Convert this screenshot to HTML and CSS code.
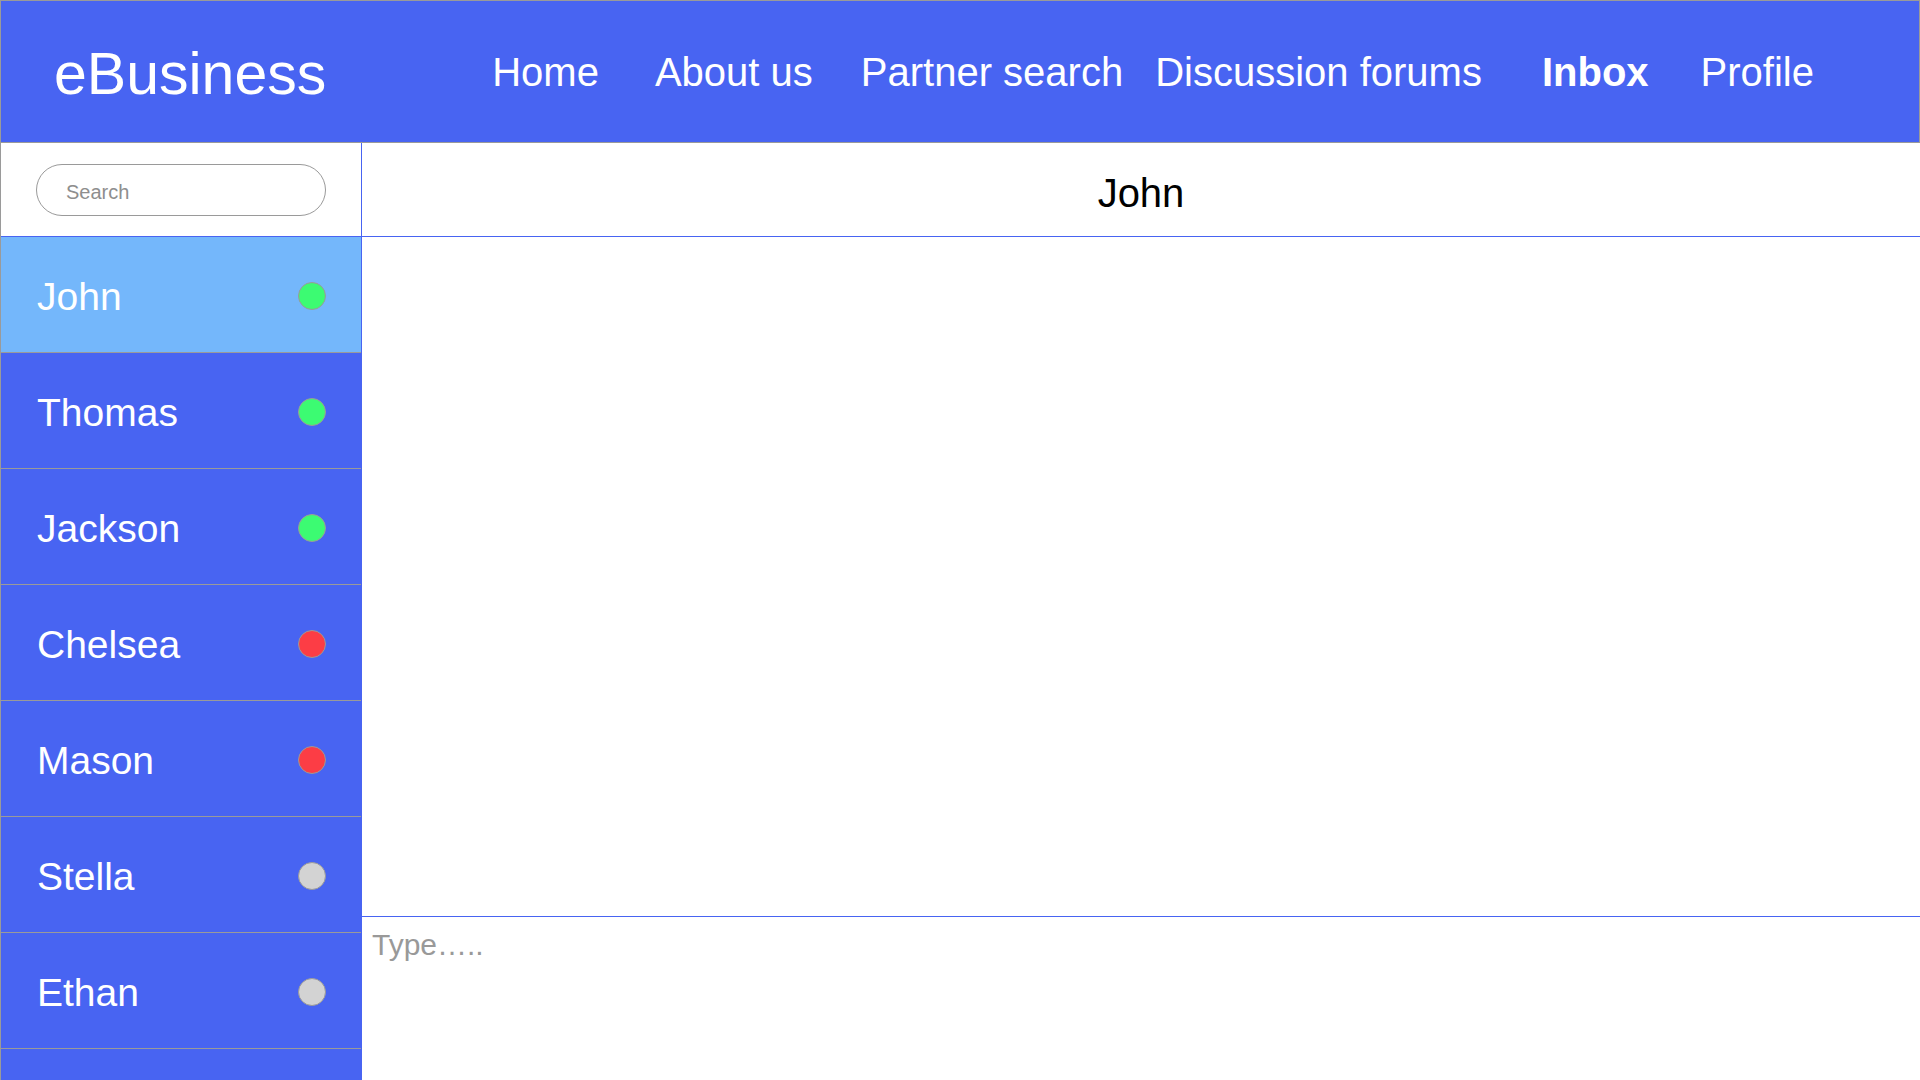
FILE: index.html
```html
<!DOCTYPE html>
<html lang="en">
<head>
<meta charset="utf-8">
<title>eBusiness - Inbox</title>
<link rel="stylesheet" href="styles.css">
</head>
<body>
<header class="topbar">
  <div class="logo">eBusiness</div>
  <nav class="nav">
    <a class="nav-item nav-home">Home</a>
    <a class="nav-item nav-about">About us</a>
    <a class="nav-item nav-partner">Partner search</a>
    <a class="nav-item nav-forums">Discussion forums</a>
    <a class="nav-item nav-inbox active">Inbox</a>
    <a class="nav-item nav-profile">Profile</a>
  </nav>
</header>
<main class="main">
  <aside class="sidebar">
    <div class="search-row">
      <div class="search-box">Search</div>
    </div>
    <ul class="contacts">
      <li class="contact selected"><span class="name">John</span><span class="dot online"></span></li>
      <li class="contact"><span class="name">Thomas</span><span class="dot online"></span></li>
      <li class="contact"><span class="name">Jackson</span><span class="dot online"></span></li>
      <li class="contact"><span class="name">Chelsea</span><span class="dot busy"></span></li>
      <li class="contact"><span class="name">Mason</span><span class="dot busy"></span></li>
      <li class="contact"><span class="name">Stella</span><span class="dot offline"></span></li>
      <li class="contact"><span class="name">Ethan</span><span class="dot offline"></span></li>
      <li class="contact empty"></li>
    </ul>
  </aside>
  <section class="chat">
    <div class="chat-header"><span class="chat-title">John</span></div>
    <div class="chat-messages"></div>
    <div class="chat-input">Type…..</div>
  </section>
</main>
</body>
</html>
```

FILE: styles.css
```css
* {
  box-sizing: border-box;
}

html, body {
  margin: 0;
  padding: 0;
  width: 1920px;
  height: 1080px;
  overflow: hidden;
  background: #ffffff;
  font-family: "Liberation Sans", Arial, Helvetica, sans-serif;
}

.topbar {
  display: flex;
  align-items: flex-start;
  height: 143px;
  background: #4864f2;
  border: 1px solid #9a9a9a;
  color: #ffffff;
}

.logo {
  margin-top: 44px;
  margin-left: 53px;
  font-size: 59px;
  line-height: 1;
}

.nav {
  display: flex;
  margin-top: 51px;
  margin-left: 166px;
}

.nav-item {
  font-size: 40px;
  line-height: 1;
  color: #ffffff;
  text-decoration: none;
  white-space: nowrap;
}

.nav-about { margin-left: 56px; }
.nav-partner { margin-left: 48px; }
.nav-forums { margin-left: 32px; }
.nav-inbox { margin-left: 60px; }
.nav-profile { margin-left: 52px; }

.nav-item.active {
  font-weight: bold;
}

.main {
  display: grid;
  grid-template-columns: 362px 1fr;
  height: 937px;
}

.sidebar {
  display: flex;
  flex-direction: column;
  border-left: 1px solid #9a9a9a;
  border-right: 1px solid #4864f2;
  overflow: hidden;
}

.search-row {
  display: flex;
  align-items: center;
  height: 94px;
  flex: none;
  padding-left: 35px;
  padding-top: 1px;
  border-bottom: 1px solid #4864f2;
}

.search-box {
  width: 290px;
  height: 52px;
  border: 1px solid #9a9a9a;
  border-radius: 26px;
  padding-left: 29px;
  display: flex;
  align-items: center;
  padding-top: 5px;
  font-size: 20px;
  color: #8e8e8e;
}

.contacts {
  list-style: none;
  margin: 0;
  padding: 0;
  flex: 1;
  background: #4864f2;
}

.contact {
  display: flex;
  align-items: center;
  justify-content: space-between;
  height: 116px;
  padding: 2px 35px 0 36px;
  background: #4864f2;
  border-bottom: 1px solid #9a9a9a;
  color: #ffffff;
}

.contact.selected {
  background: #74b7fb;
}

.contact.empty {
  border-bottom: none;
}

.name {
  font-size: 39px;
  line-height: 1;
  padding-top: 2px;
}

.dot {
  width: 28px;
  height: 28px;
  border-radius: 50%;
  border: 1px solid #9a9a9a;
  flex: none;
}

.dot.online { background: #3cfb72; }
.dot.busy { background: #fc3d45; }
.dot.offline { background: #d3d3d3; }

.chat {
  display: flex;
  flex-direction: column;
}

.chat-header {
  height: 94px;
  flex: none;
  display: flex;
  align-items: center;
  justify-content: center;
  padding-top: 6px;
  border-bottom: 1px solid #4864f2;
}

.chat-title {
  font-size: 40px;
  line-height: 1;
  color: #000000;
}

.chat-messages {
  height: 680px;
  flex: none;
  border-bottom: 1px solid #4864f2;
}

.chat-input {
  flex: 1;
  padding: 13px 0 0 10px;
  font-size: 30px;
  line-height: 1;
  color: #999999;
}
```
